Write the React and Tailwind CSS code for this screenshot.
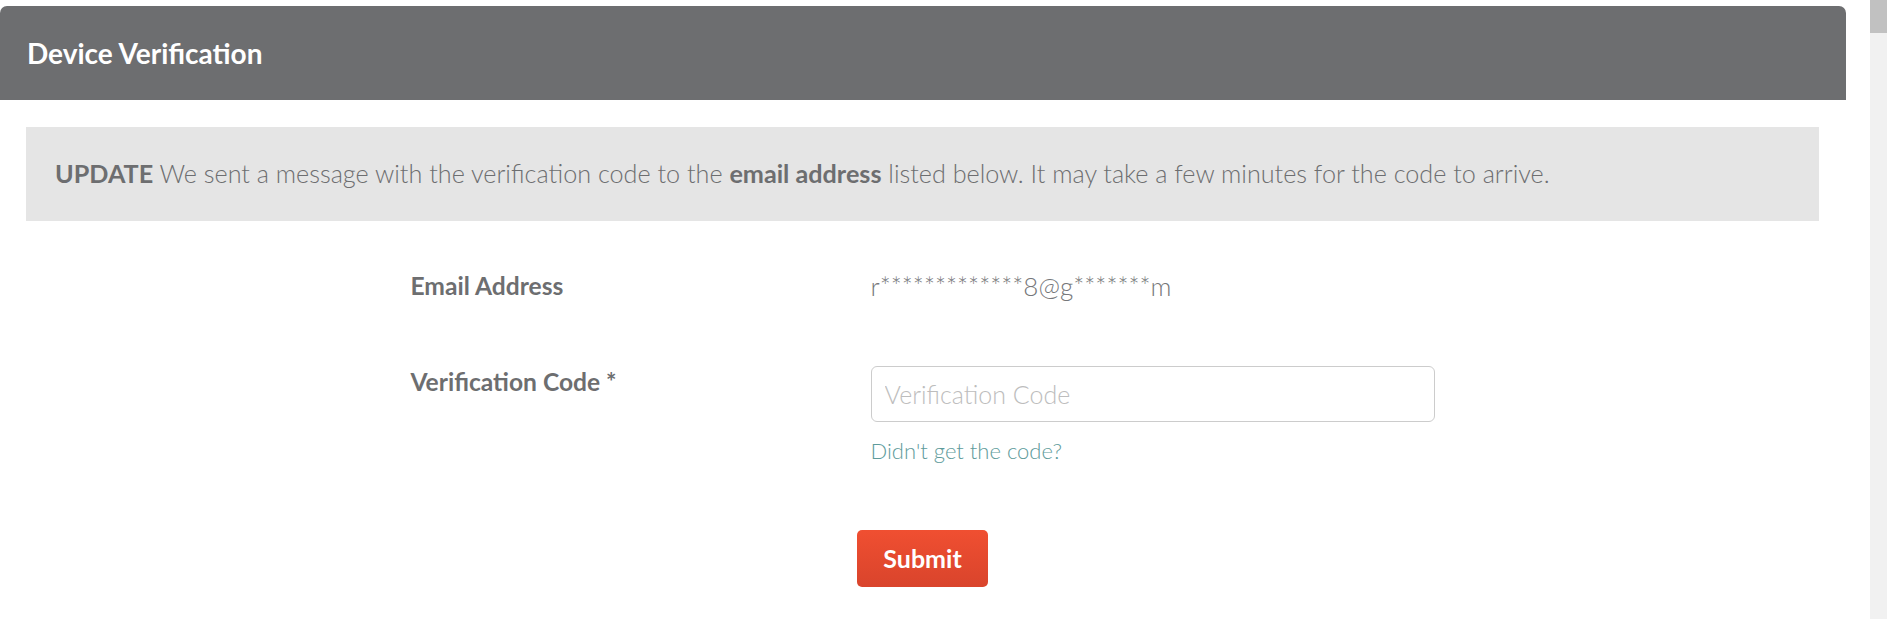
import React, { useState } from 'react'

export default function App() {
  const [code, setCode] = useState('')

  return (
    <div className="flex h-screen overflow-hidden bg-white font-['Lato',sans-serif] text-[#6d6e70]">
      <div className="flex-1 pr-6 pt-1.5">
        {/* Header */}
        <div className="flex h-[94px] items-center rounded-t-[7px] bg-[#6d6e70] pl-[27px]">
          <h1 className="text-[28px] font-bold text-white">Device Verification</h1>
        </div>

        {/* Body */}
        <div className="pl-[26px] pr-[27px] pt-[27px]">
          <div className="flex h-[94px] items-center bg-[#e5e5e5] px-[29px] text-[25.2px] font-light">
            <p>
              <span className="font-bold">UPDATE</span> We sent a message with the verification code to the{' '}
              <span className="font-bold">email address</span> listed below. It may take a few minutes for the code to arrive.
            </p>
          </div>

          <div className="mx-auto mt-[49px] grid w-[1024px] grid-cols-[460px_564px] gap-y-[64px]">
            <label className="text-[24.6px] font-bold leading-[32px]">Email Address</label>
            <p className="text-[26px] font-light leading-[32px] text-[#76777a]">r*************8@g*******m</p>

            <label htmlFor="code" className="text-[24.6px] font-bold leading-[32px]">Verification Code *</label>
            <div>
              <input
                id="code"
                value={code}
                onChange={(e) => setCode(e.target.value)}
                placeholder="Verification Code"
                className="h-[56px] w-full rounded-[6px] border border-[#cccccc] px-[13px] text-[25px] font-light outline-none placeholder:text-[#bdbdbd]"
              />
              <a href="#" className="mt-[15px] block text-[22px] font-light leading-[28px] text-[#5e9b9b]">Didn't get the code?</a>
            </div>
          </div>

          <div className="mt-[65px] flex justify-center">
            <button className="h-[57px] w-[131px] rounded-[5px] bg-gradient-to-b from-[#f04f31] to-[#d9442c] text-[25px] font-bold text-white">
              Submit
            </button>
          </div>
        </div>
      </div>

      {/* Scrollbar */}
      <div className="w-[17px] bg-[#f1f1f1]">
        <div className="h-[33px] bg-[#c1c1c1]" />
      </div>
    </div>
  )
}
